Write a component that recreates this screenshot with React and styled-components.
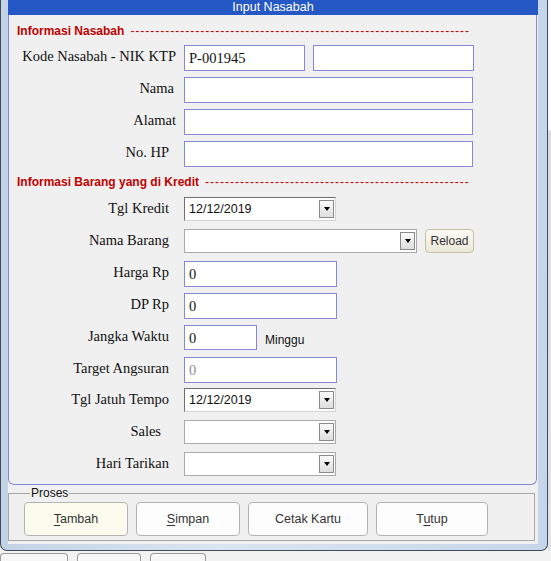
import styled, { createGlobalStyle } from 'styled-components'

const GlobalStyle = createGlobalStyle`
  html, body {
    margin: 0;
    padding: 0;
  }
  body {
    width: 551px;
    height: 561px;
    overflow: hidden;
    background: #f2f2f2;
    font-family: "Liberation Sans", Arial, sans-serif;
  }
`

const Desk = styled.div`
  display: flex;
  flex-direction: column;
  width: 551px;
  height: 561px;
`

const TopArea = styled.div`
  display: flex;
`

const SideStrip = styled.div`
  flex: 1;
  height: 551px;
  background: linear-gradient(#fafafa 0, #fafafa 130px, #dcdcdc 131px, #e4e4e4 100%);
`

const Window = styled.div`
  width: 548px;
  height: 551px;
  box-sizing: border-box;
  padding: 0 9px 6px 7px;
  border: 1px solid #3f4b5b;
  border-top: none;
  border-radius: 0 0 7px 7px;
  background: linear-gradient(90deg, #c3d3e6 0%, #dbe5f1 40%, #c6d6ea 100%);
  display: flex;
  flex-direction: column;
`

const TitleBar = styled.div`
  height: 15px;
  background: #2658c5;
  color: #fff;
  font-size: 12.5px;
  line-height: 15px;
  text-align: center;
`

const FormArea = styled.div`
  flex: 1;
  background: #f0f0f0;
  display: flex;
  flex-direction: column;
`

const Panel = styled.div`
  width: 529px;
  height: 470px;
  box-sizing: border-box;
  border: 1px solid #8787d8;
  border-top: none;
  border-radius: 0 0 6px 6px;
  padding: 8px 0 0 8px;
  display: flex;
  flex-direction: column;
`

const SectionHead = styled.div`
  height: 16px;
  line-height: 16px;
  display: flex;
  font-size: 12px;
  font-weight: bold;
  color: #c00000;
  white-space: nowrap;
  margin-top: ${p => p.$top || 0}px;
  margin-bottom: ${p => p.$bottom || 6}px;
`

const Dashes = styled.span`
  margin-left: 6px;
  font-weight: normal;
  letter-spacing: 1px;
`

const Row = styled.div`
  display: grid;
  grid-template-columns: 152px auto;
  column-gap: 15px;
  height: 32px;
  align-items: start;
`

const Label = styled.div`
  text-align: right;
  font-family: "Liberation Serif", "Times New Roman", serif;
  font-size: 14.5px;
  line-height: 22px;
  color: #111;
  white-space: nowrap;
  margin-right: ${p => p.$nudge || 0}px;
`

const Controls = styled.div`
  display: flex;
  align-items: center;
  gap: 8px;
`

const TextBox = styled.div`
  width: ${p => p.$w}px;
  height: ${p => p.$h || 26}px;
  box-sizing: border-box;
  border: 1px solid #8787d8;
  background: #fff;
  padding-left: 4px;
  font-family: "Liberation Serif", "Times New Roman", serif;
  font-size: 14.5px;
  line-height: 24px;
  color: ${p => (p.$dim ? '#8c8c8c' : '#111')};
`

const Picker = styled.div`
  width: ${p => p.$w}px;
  height: 24px;
  box-sizing: border-box;
  border: 1px solid;
  border-color: ${p => (p.$sunken ? '#6f6f6f #d4d4d4 #d4d4d4 #6f6f6f' : '#a9a9a9')};
  background: #fff;
  display: flex;
  align-items: center;
  padding-left: 4px;
  font-size: 12.5px;
  color: #111;
`

const PickerText = styled.span`
  flex: 1;
`

const DropButton = styled.div`
  width: 15px;
  height: 18px;
  margin-right: 1px;
  box-sizing: border-box;
  border: 1px solid #8a8a8a;
  background: linear-gradient(#fbfbfb, #dedede);
  display: flex;
  align-items: center;
  justify-content: center;

  &::after {
    content: '';
    border-left: 3px solid transparent;
    border-right: 3px solid transparent;
    border-top: 4px solid #000;
  }
`

const SmallButton = styled.div`
  width: 49px;
  height: 24px;
  box-sizing: border-box;
  border: 1px solid #c5c0a8;
  border-radius: 4px;
  background: linear-gradient(#fbfaf4, #ebe8d9);
  font-size: 12px;
  line-height: 22px;
  text-align: center;
  color: #333;
`

const Unit = styled.span`
  font-size: 12px;
  color: #111;
  margin-top: 6px;
`

const GroupBox = styled.fieldset`
  width: 527px;
  box-sizing: border-box;
  margin: 1px 0 0 0;
  padding: 2px 0 4px 15px;
  border: 1px solid #a7a7a7;
  display: flex;
  gap: 8px;
`

const Legend = styled.legend`
  font-size: 12px;
  line-height: 14px;
  padding: 0 1px;
  margin-left: 6px;
  color: #111;
`

const ActionButton = styled.div`
  width: ${p => p.$w}px;
  height: 34px;
  box-sizing: border-box;
  border: 1px solid #b3b3b3;
  border-radius: 4px;
  background: ${p => (p.$focus ? '#fcfcee' : '#fdfdfd')};
  font-size: 12.5px;
  line-height: 32px;
  text-align: center;
  color: #333;

  u {
    text-underline-offset: 2px;
  }
`

const BackTabs = styled.div`
  display: flex;
  gap: 9px;
  padding-top: 2px;
`

const BackTab = styled.div`
  width: ${p => p.$w}px;
  height: 8px;
  border: 1px solid #9c9c9c;
  border-bottom: none;
  border-radius: 4px 4px 0 0;
  background: #f7f7f7;
`

function Combo ({ w, sunken, value }) {
  return (
    <Picker $w={w} $sunken={sunken}>
      <PickerText>{value}</PickerText>
      <DropButton />
    </Picker>
  )
}

function App () {
  return (
    <Desk>
      <GlobalStyle />
      <TopArea>
        <Window>
          <TitleBar>Input Nasabah</TitleBar>
          <FormArea>
            <Panel>
              <SectionHead>
                Informasi Nasabah
                <Dashes>{'-'.repeat(68)}</Dashes>
              </SectionHead>
              <Row>
                <Label $nudge={-7}>Kode Nasabah - NIK KTP</Label>
                <Controls>
                  <TextBox $w={121}>P-001945</TextBox>
                  <TextBox $w={161} />
                </Controls>
              </Row>
              <Row>
                <Label $nudge={-5}>Nama</Label>
                <Controls><TextBox $w={289} /></Controls>
              </Row>
              <Row>
                <Label $nudge={-7}>Alamat</Label>
                <Controls><TextBox $w={289} /></Controls>
              </Row>
              <Row>
                <Label>No. HP</Label>
                <Controls><TextBox $w={289} /></Controls>
              </Row>

              <SectionHead $top={2} $bottom={7}>
                Informasi Barang yang di Kredit
                <Dashes>{'-'.repeat(53)}</Dashes>
              </SectionHead>
              <Row>
                <Label>Tgl Kredit</Label>
                <Controls><Combo w={152} sunken value="12/12/2019" /></Controls>
              </Row>
              <Row>
                <Label>Nama Barang</Label>
                <Controls>
                  <Combo w={233} />
                  <SmallButton>Reload</SmallButton>
                </Controls>
              </Row>
              <Row>
                <Label>Harga Rp</Label>
                <Controls><TextBox $w={153}>0</TextBox></Controls>
              </Row>
              <Row>
                <Label>DP Rp</Label>
                <Controls><TextBox $w={153}>0</TextBox></Controls>
              </Row>
              <Row>
                <Label>Jangka Waktu</Label>
                <Controls>
                  <TextBox $w={73} $h={25}>0</TextBox>
                  <Unit>Minggu</Unit>
                </Controls>
              </Row>
              <Row>
                <Label>Target Angsuran</Label>
                <Controls><TextBox $w={153} $dim>0</TextBox></Controls>
              </Row>
              <Row>
                <Label>Tgl Jatuh Tempo</Label>
                <Controls><Combo w={152} sunken value="12/12/2019" /></Controls>
              </Row>
              <Row>
                <Label $nudge={8}>Sales</Label>
                <Controls><Combo w={152} /></Controls>
              </Row>
              <Row>
                <Label>Hari Tarikan</Label>
                <Controls><Combo w={152} /></Controls>
              </Row>
            </Panel>

            <GroupBox>
              <Legend>Proses</Legend>
              <ActionButton $w={104} $focus><u>T</u>ambah</ActionButton>
              <ActionButton $w={104}><u>S</u>impan</ActionButton>
              <ActionButton $w={120}>Cetak Kartu</ActionButton>
              <ActionButton $w={112}>T<u>u</u>tup</ActionButton>
            </GroupBox>
          </FormArea>
        </Window>
        <SideStrip />
      </TopArea>
      <BackTabs>
        <BackTab $w={66} />
        <BackTab $w={62} />
        <BackTab $w={54} />
      </BackTabs>
    </Desk>
  )
}

export default App
